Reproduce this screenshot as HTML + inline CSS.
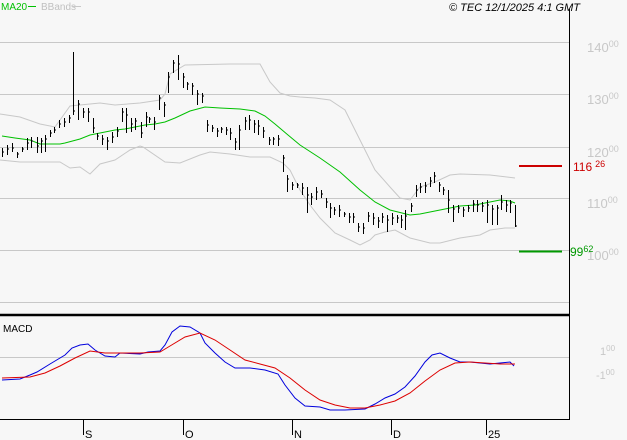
<!DOCTYPE html>
<html><head><meta charset="utf-8"><style>
html,body{margin:0;padding:0;background:#f7f7f7;}
svg{display:block;font-family:"Liberation Sans",sans-serif;}
</style></head><body>
<svg width="627" height="440" viewBox="0 0 627 440" xmlns="http://www.w3.org/2000/svg">
<rect width="627" height="440" fill="#f7f7f7"/>
<!-- header -->
<text x="1" y="10" font-size="10" fill="#00c000">MA20</text>
<line x1="28" y1="6.5" x2="36" y2="6.5" stroke="#00c000" stroke-width="1"/>
<text x="41" y="10" font-size="10" fill="#c0c0c0">BBands</text>
<line x1="72" y1="6.5" x2="81" y2="6.5" stroke="#c8c8c8" stroke-width="1"/>
<text x="449" y="11" font-size="11" font-style="italic" fill="#000">© TEC 12/1/2025 4:1 GMT</text>
<!-- grid -->
<g stroke="#c8c8c8" stroke-width="1">
<line x1="0" y1="42.5" x2="569" y2="42.5"/>
<line x1="0" y1="94.5" x2="569" y2="94.5"/>
<line x1="0" y1="147.5" x2="569" y2="147.5"/>
<line x1="0" y1="198.5" x2="569" y2="198.5"/>
<line x1="0" y1="250.5" x2="569" y2="250.5"/>
<line x1="0" y1="302.5" x2="569" y2="302.5"/>
<line x1="0" y1="357.5" x2="569" y2="357.5"/>
</g>
<!-- axis labels -->
<g fill="#c8c8c8" font-size="13">
<text x="587" y="52">140<tspan font-size="9" dy="-5">00</tspan></text>
<text x="587" y="104">130<tspan font-size="9" dy="-5">00</tspan></text>
<text x="587" y="157">120<tspan font-size="9" dy="-5">00</tspan></text>
<text x="587" y="208">110<tspan font-size="9" dy="-5">00</tspan></text>
<text x="587" y="260">100<tspan font-size="9" dy="-5">00</tspan></text>
<text x="600" y="355" font-size="11">1<tspan font-size="8" dy="-4">00</tspan></text>
<text x="596" y="379" font-size="11">-1<tspan font-size="8" dy="-4">00</tspan></text>
</g>
<!-- bands -->
<polyline fill="none" stroke="#c8c8c8" stroke-width="1" points="0,114 20,117 40,124 55,127 70,106 100,103 115,105 140,103 160,100 165,94 170,74 185,65 230,64 260,64 270,82 280,93 290,96 300,97 315,98 330,100 345,110 360,140 375,170 390,187 400,198 410,200 420,187 435,182 450,175 460,174 490,175 515,178"/>
<polyline fill="none" stroke="#c8c8c8" stroke-width="1" points="0,160 20,162 40,162 60,162 70,168 80,167 90,174 100,164 115,160 130,150 140,146 143,147 165,162 180,163 200,155 210,152 230,154 250,157 270,157 283,163 290,170 300,190 310,205 320,218 335,233 350,240 360,245 370,240 375,235 385,232 395,230 410,238 430,243 440,243 460,238 480,235 490,230 505,228 515,228"/>
<!-- MA20 -->
<polyline fill="none" stroke="#00c000" stroke-width="1" points="2,136 15,138 30,140 40,144 60,144 65,143 80,139 90,135 100,133 115,130 125,129 135,127 145,125 155,124 165,122 175,118 190,111 205,107 220,108 240,109 255,111 265,116 275,124 288,135 300,145 320,158 340,172 360,190 375,202 390,210 410,215 420,214 440,210 460,206 475,205 490,202 500,200 510,201 515,203"/>
<!-- bars -->
<path fill="none" stroke="#000" stroke-width="1" d="
M2.5 148V157M2 152h2
M7.5 145V155M7 149h2
M12.5 143V152M12 148h2
M17.5 152V158M17 154h2
M22.5 147V152M22 149h2
M27.5 138V150M27 143h2
M31.5 137V148M31 141h2
M37.5 137V153M37 146h2
M41.5 138V153M41 141h2
M45.5 135V152M45 139h2
M50.5 130V137M50 133h2
M54.5 127V133M54 130h2
M59.5 120V128M59 124h2
M64.5 118V127M64 122h2
M69.5 115V123M69 118h2
M73.5 52V115M73 111h2
M78.5 100V120M78 104h2
M83.5 108V118M83 112h2
M88.5 108V122M88 112h2
M93.5 118V133M93 128h2
M97.5 133V140M97 136h2
M102.5 135V145M102 139h2
M107.5 137V150M107 141h2
M112.5 132V143M112 137h2
M117.5 127V137M117 131h2
M122.5 108V122M122 112h2
M126.5 108V133M126 115h2
M131.5 118V132M131 124h2
M135.5 118V130M135 121h2
M141.5 122V138M141 133h2
M146.5 112V127M146 117h2
M149.5 117V123M149 119h2
M154.5 117V130M154 122h2
M159.5 95V110M159 98h2
M164.5 102V117M164 105h2
M168.5 72V93M168 77h2
M173.5 60V73M173 63h2
M178.5 55V80M178 64h2
M183.5 73V88M183 77h2
M187.5 82V90M187 84h2
M192.5 83V95M192 86h2
M197.5 90V105M197 94h2
M202.5 93V103M202 96h2
M207.5 120V132M207 125h2
M212.5 125V132M212 128h2
M217.5 128V137M217 131h2
M221.5 127V133M221 129h2
M226.5 127V135M226 130h2
M230.5 128V140M230 133h2
M235.5 138V150M235 142h2
M239.5 125V150M239 130h2
M245.5 117V130M245 121h2
M249.5 115V130M249 120h2
M254.5 120V133M254 124h2
M258.5 120V135M258 126h2
M263.5 127V138M263 131h2
M269.5 137V145M269 140h2
M273.5 137V145M273 139h2
M278.5 135V146M278 139h2
M283.5 155V172M283 158h2
M287.5 175V192M287 179h2
M292.5 182V190M292 185h2
M297.5 183V188M297 185h2
M302.5 183V195M302 188h2
M307.5 187V213M307 195h2
M311.5 193V205M311 197h2
M316.5 187V200M316 192h2
M321.5 190V198M321 194h2
M326.5 198V208M326 202h2
M330.5 203V218M330 208h2
M334.5 207V215M334 210h2
M339.5 205V217M339 210h2
M344.5 212V217M344 214h2
M349.5 213V223M349 217h2
M353.5 213V223M353 217h2
M358.5 223V232M358 227h2
M363.5 223V234M363 228h2
M368.5 212V222M368 216h2
M373.5 213V225M373 218h2
M378.5 217V228M378 221h2
M382.5 213V223M382 217h2
M387.5 215V232M387 220h2
M392.5 213V225M392 218h2
M397.5 215V223M397 218h2
M401.5 215V228M401 220h2
M405.5 210V230M405 216h2
M411.5 203V212M411 206h2
M416.5 185V197M416 190h2
M420.5 183V193M420 187h2
M425.5 182V193M425 186h2
M430.5 177V187M430 181h2
M434.5 172V183M434 176h2
M439.5 182V192M439 185h2
M443.5 187V195M443 190h2
M448.5 190V213M448 200h2
M453.5 205V222M453 209h2
M458.5 205V213M458 208h2
M463.5 207V217M463 210h2
M468.5 205V212M468 208h2
M473.5 200V212M473 204h2
M477.5 200V212M477 205h2
M482.5 202V212M482 206h2
M487.5 200V223M487 205h2
M492.5 205V225M492 209h2
M497.5 205V225M497 208h2
M501.5 195V210M501 202h2
M506.5 200V212M506 205h2
M510.5 200V213M510 203h2
M515.5 205V227M515 226h2
"/>
<!-- target lines -->
<line x1="519" y1="166" x2="562" y2="166" stroke="#cc0000" stroke-width="2"/>
<text x="573" y="171" font-size="12" fill="#cc0000">116<tspan font-size="9" dy="-4" dx="3">26</tspan></text>
<line x1="519" y1="251.5" x2="562" y2="251.5" stroke="#009900" stroke-width="2"/>
<text x="570" y="256" font-size="12" fill="#009900">99<tspan font-size="9" dy="-4">62</tspan></text>
<!-- frame -->
<line x1="569.5" y1="9" x2="569.5" y2="419" stroke="#000" stroke-width="1"/>
<line x1="0" y1="315" x2="569" y2="315" stroke="#000" stroke-width="2.5"/>
<line x1="0" y1="419.5" x2="570" y2="419.5" stroke="#000" stroke-width="1"/>
<text x="3" y="332" font-size="10" fill="#000">MACD</text>
<!-- MACD -->
<polyline fill="none" stroke="#0000dd" stroke-width="1" points="2,380 20,379 30,375 37,372 50,364 65,355 72,348 80,345 88,344 95,350 105,356 115,357 120,353 140,354 148,352 160,351 165,345 172,332 180,326 190,327 200,333 205,343 215,353 225,362 235,368 250,368 265,370 278,374 285,385 295,398 305,406 320,407 330,410 345,410 365,409 375,404 385,398 395,394 405,387 415,376 425,362 432,355 440,353 450,358 460,362 470,362 490,364 500,363 510,362 514,366"/>
<polyline fill="none" stroke="#dd0000" stroke-width="1" points="2,378 30,377 45,373 60,366 75,358 90,351 105,353 140,353 160,352 170,346 185,337 200,333 215,340 230,350 245,360 260,364 275,368 290,378 305,390 320,400 335,405 350,408 365,408 380,405 395,401 410,393 425,381 440,370 455,363 470,362 500,364 515,364"/>
<!-- x ticks -->
<g stroke="#000" stroke-width="1">
<line x1="83.5" y1="419" x2="83.5" y2="435"/>
<line x1="183.5" y1="419" x2="183.5" y2="435"/>
<line x1="292.5" y1="419" x2="292.5" y2="435"/>
<line x1="391.5" y1="419" x2="391.5" y2="435"/>
<line x1="486.5" y1="419" x2="486.5" y2="435"/>
</g>
<g font-size="11" fill="#000">
<text x="85" y="438">S</text>
<text x="185" y="438">O</text>
<text x="294" y="438">N</text>
<text x="393" y="438">D</text>
<text x="488" y="438">25</text>
</g>
</svg>
</body></html>
